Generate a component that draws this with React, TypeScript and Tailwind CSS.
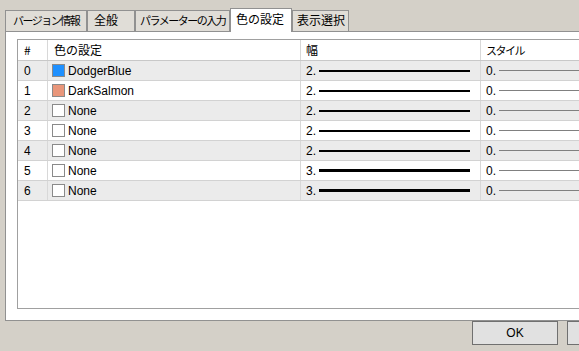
import React from 'react';

type Row = { idx: number; color: string | null; name: string; width: number };

const rows: Row[] = [
  { idx: 0, color: '#1e90ff', name: 'DodgerBlue', width: 2 },
  { idx: 1, color: '#e9967a', name: 'DarkSalmon', width: 2 },
  { idx: 2, color: null, name: 'None', width: 2 },
  { idx: 3, color: null, name: 'None', width: 2 },
  { idx: 4, color: null, name: 'None', width: 2 },
  { idx: 5, color: null, name: 'None', width: 3 },
  { idx: 6, color: null, name: 'None', width: 3 },
];

const jp = "font-['Noto_Sans_CJK_JP',sans-serif]";

function Tab({ label, width, pad, tight, active }: { label: string; width: string; pad: string; tight?: boolean; active?: boolean }) {
  if (active) {
    return (
      <div
        className={`relative z-10 -mb-px flex h-[24px] ${width} ${pad} items-start whitespace-nowrap border border-b-0 border-[#919191] bg-white pt-[2px] text-[12px] leading-[16px] ${jp}`}
      >
        {label}
      </div>
    );
  }
  return (
    <div
      className={`flex h-[21px] ${width} ${pad} items-start overflow-hidden whitespace-nowrap border border-b-0 border-[#919191] bg-[#e0ddd7] pt-[1px] leading-[16px] ${jp} ${tight ? 'text-[11px] tracking-[-1.5px]' : 'text-[12px]'}`}
    >
      {label}
    </div>
  );
}

export default function App() {
  return (
    <div className="h-[351px] w-[579px] overflow-hidden bg-[#d4d0c8] text-black font-['Liberation_Sans',sans-serif]">
      <div className="flex h-[31px] items-end pl-[5px]">
        <Tab label="バージョン情報" width="w-[82px]" pad="pl-[7px]" tight />
        <Tab label="全般" width="w-[48px]" pad="pl-[6px]" />
        <Tab label="パラメーターの入力" width="w-[95px]" pad="pl-[4px]" tight />
        <Tab label="色の設定" width="w-[62px]" pad="pl-[5px]" active />
        <Tab label="表示選択" width="w-[57px]" pad="pl-[4px]" />
      </div>

      <div className="ml-[5px] h-[290px] w-[600px] border border-[#919191] bg-white pl-[11px] pt-[7px]">
        <div className="h-[270px] w-[600px] border border-[#a0a0a0] bg-white">
          {/* header */}
          <div className={`flex h-[21px] border-b border-[#c8c8c8] text-[12px] leading-[20px] ${jp}`}>
            <div className="w-[30px] border-r border-[#d8d8d8] pl-[6px]">#</div>
            <div className="w-[253px] border-r border-[#d8d8d8] pl-[6px]">色の設定</div>
            <div className="w-[180px] border-r border-[#d8d8d8] pl-[5px]">幅</div>
            <div className="flex-1 pl-[5px] text-[11px] tracking-[-1.5px]">スタイル</div>
          </div>

          {rows.map((r) => (
            <div
              key={r.idx}
              className={`flex h-[20px] border-b border-[#d2d2d2] text-[12px] leading-[20px] ${r.idx % 2 === 0 ? 'bg-[#ebebeb]' : 'bg-white'}`}
            >
              <div className="w-[30px] border-r border-[#d8d8d8] pl-[6px]">{r.idx}</div>
              <div className="flex w-[253px] items-center border-r border-[#d8d8d8] pl-[4px]">
                <span
                  className="mr-[3px] h-[13px] w-[13px] border border-[#8a8a8a]"
                  style={{ backgroundColor: r.color ?? '#ffffff' }}
                />
                <span>{r.name}</span>
              </div>
              <div className="flex w-[180px] items-center border-r border-[#d8d8d8] pl-[5px]">
                <span className="w-[13px]">{r.width}.</span>
                <span className={`w-[151px] bg-black ${r.width === 3 ? 'h-[3px]' : 'h-[2px]'}`} />
              </div>
              <div className="flex flex-1 items-center pl-[5px]">
                <span className="w-[13px]">0.</span>
                <span className="h-px flex-1 bg-[#808080]" />
              </div>
            </div>
          ))}
        </div>
      </div>

      <div className="flex gap-[9px] pl-[472px]">
        <button className="h-[24px] w-[86px] shrink-0 border border-[#707070] bg-[#e1e1e1] text-[12px]">OK</button>
        {/* second button runs off the window edge; its label is not visible */}
        <button aria-label="キャンセル" className="h-[24px] w-[86px] shrink-0 border border-[#707070] bg-[#e1e1e1]" />
      </div>
    </div>
  );
}
